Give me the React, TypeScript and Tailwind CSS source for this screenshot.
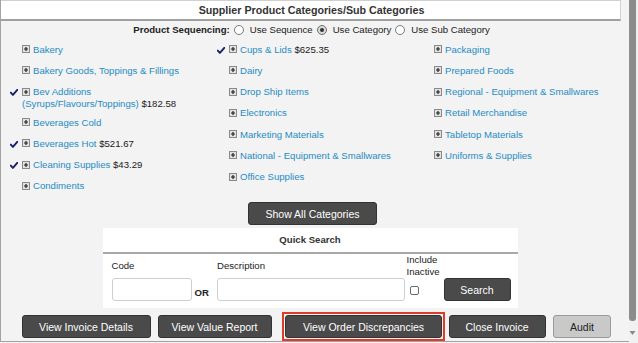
import React from "react";

const Check = () => (
  <svg width="8" height="7" viewBox="0 0 8 7" className="block">
    <path d="M0.8 3.6 L2.9 5.9 L7.3 0.8" fill="none" stroke="#1c1c6e" strokeWidth="1.9" strokeLinejoin="round" strokeLinecap="round" />
  </svg>
);

const PlusBox = () => (
  <svg width="8" height="8" viewBox="0 0 8 8" className="inline-block align-[-0.5px] mr-[3px]">
    <rect x="0.5" y="0.5" width="7" height="7" fill="#e2e2e2" stroke="#8a8a8a" strokeWidth="1" />
    <path d="M2 4 H6 M4 2 V6" stroke="#222" strokeWidth="1.2" />
  </svg>
);

type Item = { name: string; name2?: string; price?: string; checked?: boolean };

const col1: Item[] = [
  { name: "Bakery" },
  { name: "Bakery Goods, Toppings & Fillings" },
  { name: "Bev Additions", name2: "(Syrups/Flavours/Toppings)", price: "$182.58", checked: true },
  { name: "Beverages Cold" },
  { name: "Beverages Hot", price: "$521.67", checked: true },
  { name: "Cleaning Supplies", price: "$43.29", checked: true },
  { name: "Condiments" },
];
const col2: Item[] = [
  { name: "Cups & Lids", price: "$625.35", checked: true },
  { name: "Dairy" },
  { name: "Drop Ship Items" },
  { name: "Electronics" },
  { name: "Marketing Materials" },
  { name: "National - Equipment & Smallwares" },
  { name: "Office Supplies" },
];
const col3: Item[] = [
  { name: "Packaging" },
  { name: "Prepared Foods" },
  { name: "Regional - Equipment & Smallwares" },
  { name: "Retail Merchandise" },
  { name: "Tabletop Materials" },
  { name: "Uniforms & Supplies" },
];

const Row = ({ it }: { it: Item }) => (
  <div className={`flex pt-[4.6px] ${it.name2 ? "h-[30.5px]" : "h-[21.25px]"}`}>
    <div className="w-[17px] shrink-0 pl-[4.5px] pt-[3px]">{it.checked ? <Check /> : null}</div>
    <div className="leading-[12px]">
      <PlusBox />
      <a className="text-[#1f8cc4] no-underline">{it.name}</a>
      {it.name2 ? (
        <>
          <br />
          <a className="text-[#1f8cc4] no-underline">{it.name2}</a>
        </>
      ) : null}
      {it.price ? <span className="text-[#1a1a1a]"> {it.price}</span> : null}
    </div>
  </div>
);

const Radio = ({ on }: { on?: boolean }) => (
  <span
    className={`ml-[4px] mr-[6px] inline-flex w-[10px] h-[10px] rounded-full border items-center justify-center ${
      on ? "border-[#6e6e6e] bg-[#d9d9d9]" : "border-[#7a7a7a] bg-white"
    }`}
  >
    {on ? <span className="w-[4px] h-[4px] rounded-full bg-[#333]" /> : null}
  </span>
);

const DarkBtn = ({ children, className = "" }: { children: React.ReactNode; className?: string }) => (
  <button
    className={`h-[23px] rounded-[3px] border border-[#333] bg-[#4a4a4a] text-white text-[10.5px] leading-[12px] ${className}`}
  >
    {children}
  </button>
);

export default function App() {
  return (
    <div
      className="w-[638px] h-[343px] flex bg-[#f3f3f3] overflow-hidden text-[#222]"
      style={{ fontFamily: '"Liberation Sans", Arial, sans-serif' }}
    >
      <div className="w-[629px] h-[342px] border-l border-b border-[#a3a3a3] flex flex-col text-[9.6px]">
        <div className="w-[620px] h-[21px] bg-white border-t border-r border-[#d0d0d0] border-b-2 border-b-[#a0a0a0] flex items-center justify-center pl-[2px]">
          <span className="font-bold text-[10.7px] text-[#333] leading-[12px]">
            Supplier Product Categories/Sub Categories
          </span>
        </div>

        <div className="w-[620px] h-[18px] flex items-center justify-center pl-[1px] leading-[12px]">
          <span className="font-bold">Product Sequencing:</span>
          <Radio />
          <span>Use Sequence</span>
          <Radio on />
          <span>Use Category</span>
          <Radio />
          <span>Use Sub Category</span>
        </div>

        <div className="w-[620px] grid grid-cols-[207px_205px_1fr] pl-[4px]">
          <div className="flex flex-col">
            {col1.map((it) => (
              <Row key={it.name} it={it} />
            ))}
          </div>
          <div className="flex flex-col">
            {col2.map((it) => (
              <Row key={it.name} it={it} />
            ))}
          </div>
          <div className="flex flex-col">
            {col3.map((it) => (
              <Row key={it.name} it={it} />
            ))}
          </div>
        </div>

        <div className="w-[620px] flex justify-center pl-[3px] mt-[5px]">
          <DarkBtn className="w-[129px]">Show All Categories</DarkBtn>
        </div>

        <div className="w-[620px] flex justify-center pr-[2px] mt-[3px]">
          <div className="w-[415px] h-[80px] bg-white flex flex-col">
            <div className="h-[26px] border-b-2 border-[#a8a8a8] flex items-center justify-center">
              <span className="font-bold leading-[12px] text-[#333]">Quick Search</span>
            </div>
            <div className="h-[54px] flex items-end pl-[9px] pb-[7px] leading-[12px]">
              <div className="flex flex-col w-[80.5px]">
                <span>Code</span>
                <div className="mt-[5.5px] h-[23.5px] rounded-[3px] border border-[#cfcfcf] bg-white" />
              </div>
              <span className="ml-[2.5px] w-[22.5px] font-bold mb-[2px]">OR</span>
              <div className="flex flex-col w-[188px]">
                <span>Description</span>
                <div className="mt-[5.5px] h-[23.5px] rounded-[3px] border border-[#cfcfcf] bg-white" />
              </div>
              <div className="ml-[1.5px] w-[37px] flex flex-col">
                <span className="leading-[11.5px]">
                  Include
                  <br />
                  Inactive
                </span>
                <span className="ml-[3px] mt-[9px] mb-[6px] w-[9px] h-[9px] rounded-[2px] border border-[#6a6a6a] bg-white" />
              </div>
              <DarkBtn className="w-[67px] h-[23.5px]">Search</DarkBtn>
            </div>
          </div>
        </div>

        <div className="h-[29px] mt-[4px] flex items-center pl-[20.5px]">
          <DarkBtn className="w-[129px]">View Invoice Details</DarkBtn>
          <DarkBtn className="w-[114px] ml-[7px]">View Value Report</DarkBtn>
          <div className="ml-[10.5px] w-[163px] h-[29px] border-2 border-[#e23a2a] p-[1px] flex">
            <DarkBtn className="w-full">View Order Discrepancies</DarkBtn>
          </div>
          <DarkBtn className="w-[97px] ml-[3.5px]">Close Invoice</DarkBtn>
          <button className="ml-[7.5px] w-[58px] h-[23px] rounded-[3px] border border-[#9a9a9a] bg-[#c9c9c9] text-[#222] text-[10.5px] leading-[12px]">
            Audit
          </button>
        </div>
      </div>

      <div className="w-[9px] h-[343px] bg-[#f1f1f1] flex flex-col items-start">
        <div className="w-[7px] h-[321px] bg-[#8c8c8c] rounded-b-[3px]" />
        <svg width="7" height="6" viewBox="0 0 7 6" className="mt-[9px]">
          <path d="M0.5 1 H6.5 L3.5 5 Z" fill="#8a8a8a" />
        </svg>
      </div>
    </div>
  );
}
